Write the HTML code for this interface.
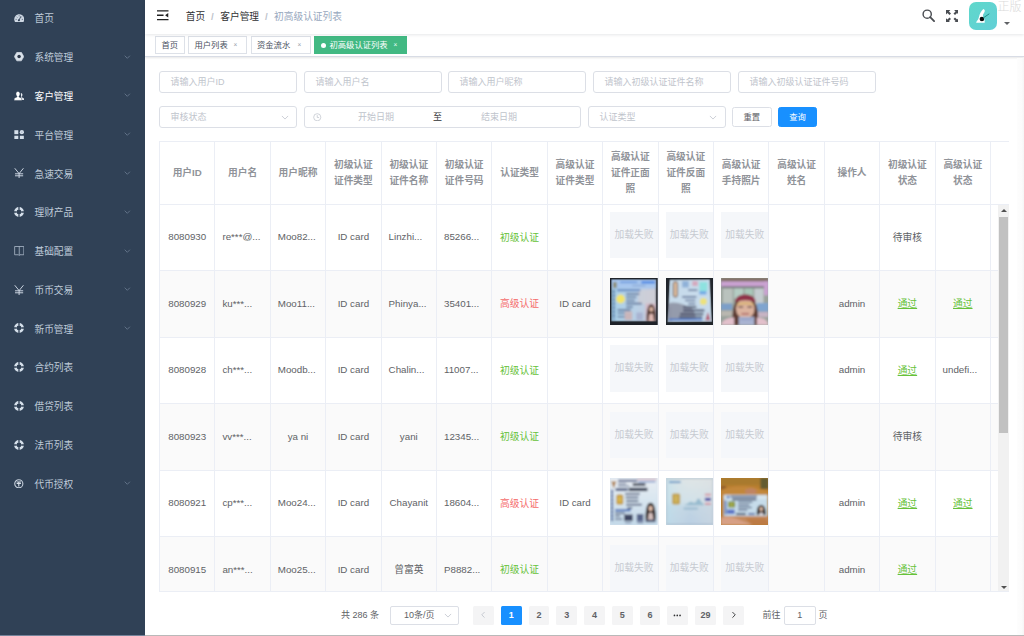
<!DOCTYPE html>
<html lang="zh-CN"><head><meta charset="utf-8"><title>初高级认证列表</title>
<style>
*{box-sizing:border-box;margin:0;padding:0}
html,body{width:1024px;height:636px;overflow:hidden;background:#fff}
body{position:relative;font-family:"Liberation Sans","Noto Sans CJK SC",sans-serif;font-size:9.700px;color:#606266;-webkit-font-smoothing:antialiased}
svg{display:block}
#side{position:absolute;left:0;top:0;width:145px;height:636px;background:#304156}
.mi{position:absolute;left:0;width:145.500px;height:20px;line-height:20px;color:#bfcbd9;font-size:9.700px;white-space:nowrap}
.mi .ic{position:absolute;left:13.300px;top:-1.200px;width:11px;height:20px;display:flex;align-items:center;justify-content:center}
.mi .mt{position:absolute;left:34.500px;top:0}
.mi .arr{position:absolute;left:124px;top:6.500px}
#nav{position:absolute;left:145px;top:0;width:879px;height:34px;z-index:2;background:#fff;box-shadow:0 1px 3px rgba(0,21,41,.10)}
#ham{position:absolute;left:12px;top:10px}
#bc{position:absolute;left:40.800px;top:0;height:33px;line-height:33px;font-size:9.700px;white-space:nowrap}
#bc .b1{color:#303133}
#bc .b2{color:#97a8be}
#bc .sep{color:#c0c4cc;margin:0 6.500px 0 5.900px;font-weight:bold}
#srch{position:absolute;left:776.600px;top:9.300px}
#full{position:absolute;left:800.700px;top:9.600px}
#ava{position:absolute;left:824.300px;top:2px;width:27.500px;height:28px;border-radius:7px;background:linear-gradient(135deg,#5fd8cb,#62cfd6);overflow:hidden}
#caret{position:absolute;left:858.900px;top:21.800px;width:0;height:0;border-left:3px solid transparent;border-right:3px solid transparent;border-top:3.300px solid #606266}
#wm{position:absolute;left:852.500px;top:-1.500px;font-size:12px;line-height:16px;color:#dadada;font-weight:300;white-space:nowrap}
#tags{position:absolute;left:145px;top:34px;width:879px;height:23px;background:#fff;border-bottom:1px solid #d8dce5;box-shadow:0 1px 2px rgba(0,0,0,.10)}
.tag{position:absolute;top:2.300px;height:18px;line-height:16.900px;border:1px solid #dde1e8;background:#fff;color:#495060;font-size:8.300px;padding-left:5.500px;white-space:nowrap;display:block}
.tag i{font-style:normal}
.tag b{font-weight:normal;position:absolute;right:8.600px;top:0;font-size:6.500px;color:#9aa1ad}
.tag.act{background:#42b983;border-color:#42b983;color:#fff;padding-left:14.500px}
.tag.act u{position:absolute;left:5.500px;top:5.500px;width:5.500px;height:5.500px;border-radius:50%;background:#fff}
.tag.act b{color:#e8fff4}
.inp{position:absolute;height:21.500px;border:1px solid #dcdfe6;border-radius:3px;background:#fff;color:#c0c4cc;font-size:9px;line-height:21px;padding-left:10.500px;white-space:nowrap}
.inp .chev{position:absolute;right:7.500px;top:7.500px}
.inp .clk{position:absolute;left:8px;top:5.500px}
.inp .d1{position:absolute;left:53px}
.inp .dz{position:absolute;left:128px;color:#303133}
.inp .d2{position:absolute;left:176px}
.btn{position:absolute;height:19.500px;border:1px solid #dcdfe6;border-radius:2.500px;background:#fff;color:#606266;font-size:8.300px;line-height:18.800px;text-align:center}
.btn.pri{background:#1890ff;border-color:#1890ff;color:#fff}
#tbl{position:absolute;left:159px;top:141px;width:849.500px;height:450.500px;border:1px solid #ebeef5;border-right:none;overflow:hidden;background:#fff}
#thead{position:absolute;left:0;top:0;width:100%;height:62.700px;border-bottom:1px solid #ebeef5}
.th{position:absolute;top:0;height:62.700px;border-right:1px solid #ebeef5;display:flex;align-items:center;justify-content:center;text-align:center;color:#909399;font-weight:bold;font-size:9.700px;line-height:16px}
.th.gut{border-right:1px solid #ebeef5}
#tbody{position:absolute;left:0;top:62.700px;width:849.500px;height:388px;overflow:hidden}
.tr{position:absolute;left:0;width:839px;height:66.550px;border-bottom:1px solid #ebeef5;background:#fff}
.tr.st{background:#fafafa}
.td{position:absolute;top:0;height:66.550px;border-right:1px solid #ebeef5;overflow:hidden;text-align:center;line-height:65.400px;font-size:9.750px;color:#606266;white-space:nowrap}
.tx.la{position:relative;top:-.700px}
.tx.el{position:absolute;left:7px;top:-.700px}
.tx.g{color:#67c23a}
.tx.r{color:#f56c6c}
.tx.lk{text-decoration:underline}
.fail{position:absolute;left:7px;top:7.300px;width:47.500px;height:46.500px;background:#f5f7fa;color:#c6cad1;font-size:9.750px;line-height:46.500px;text-align:center}
.pic{position:absolute;left:7px;top:6.800px;width:47.500px;height:47px;overflow:hidden}
#sb{position:absolute;left:838.200px;top:0;width:10.800px;height:388px;background:#f1f1f1}
#sbt{position:absolute;left:1px;top:12px;width:8.800px;height:216.500px;background:#c1c1c1}
#sbu{position:absolute;left:2.500px;top:4.500px;border-left:3px solid transparent;border-right:3px solid transparent;border-bottom:3px solid #505050}
#sbd{position:absolute;left:2.500px;bottom:4px;border-left:3px solid transparent;border-right:3px solid transparent;border-top:3px solid #505050}
.ptx{position:absolute;top:605.500px;height:19.500px;line-height:19.500px;font-size:9px;color:#606266;white-space:nowrap}
.psel{position:absolute;top:605.500px;height:19.500px;border:1px solid #dcdfe6;border-radius:2px;line-height:17.500px;font-size:9px;color:#606266;padding-left:13px}
.psel .chev{position:absolute;right:5.500px;top:6.500px}
.pb{position:absolute;top:605.500px;width:20.800px;height:19.500px;border-radius:1.500px;background:#f4f4f5;color:#606266;font-size:9px;font-weight:bold;line-height:19.500px;text-align:center;display:flex;align-items:center;justify-content:center}
.pb.on{background:#1890ff;color:#fff}
.pin{position:absolute;top:605.500px;height:19.500px;border:1px solid #dcdfe6;border-radius:2px;line-height:17.500px;font-size:9px;color:#606266;text-align:center}
#bot{position:absolute;left:0;top:635px;width:1024px;height:1px;background:linear-gradient(90deg,#74839a 0,#74839a 145px,#b9b9b9 145px);z-index:5}
#rstrip{position:absolute;left:1016.500px;top:58px;width:7.500px;height:577px;background:linear-gradient(90deg,#fdfdfd,#fbfbfb 70%,#f5f5f5)}
</style></head><body>
<svg width="0" height="0" style="position:absolute;left:0;top:0"><defs><filter id="bl" x="-5%" y="-5%" width="110%" height="110%"><feGaussianBlur stdDeviation="0.8"/></filter></defs></svg>
<div id="side"><div class="mi" style="top:9.35px"><span class="ic"><svg viewBox="0 0 20 16" width="10.500" height="8.200"><path d="M10 .6C4.500 .6 .3 5 .3 10.400c0 1.900.5 3.600 1.400 5h16.600c.9-1.400 1.400-3.100 1.400-5C19.700 5 15.500 .6 10 .6z" fill="#cdd7e3"/><path d="M9.300 12.500 13 5" stroke="#304156" stroke-width="1.700" stroke-linecap="round"/><circle cx="9.300" cy="12.300" r="2" fill="#304156"/><path d="M2.800 10.500H5M15 10.500h2.200M4.800 5.400l1.500 1.500M9.800 2.600v2M15.200 5.600l-1 1" stroke="#304156" stroke-width="1.300"/></svg></span><span class="mt">首页</span></div><div class="mi" style="top:48.14px"><span class="ic"><svg viewBox="0 0 20 18" width="10.200" height="9.200"><path d="M5.600 .6h8.800l4.900 8.400-4.900 8.400H5.600L.7 9z" fill="#d9e1ea" stroke="#d9e1ea" stroke-width="1.200" stroke-linejoin="round"/><circle cx="10" cy="9" r="3.400" fill="#2b3647"/></svg></span><span class="mt">系统管理</span><svg class="arr" viewBox="0 0 10 6" width="6.600" height="4"><path d="M1 1l4 4 4-4" fill="none" stroke="#6f7f94" stroke-width="1.200"/></svg></div><div class="mi" style="top:86.93px"><span class="ic"><svg viewBox="0 0 20 20" width="10.200" height="10.200"><path d="M13.300 3.800c2 0 3.300 1.600 3.300 3.700 0 1.500-.6 2.700-1.500 3.400v1.200l3.700 1.900c.6.300.9.800.9 1.400v2.400h-5.200z" fill="#e9eef4"/><path d="M7.600 1c2.600 0 4.200 2 4.200 4.700 0 1.900-.8 3.500-2 4.400v1.500l4.400 2.200c.7.400 1.100 1 1.100 1.800v2.900H.3v-2.900c0-.8.400-1.400 1.100-1.800l4.400-2.200v-1.500c-1.200-.9-2-2.500-2-4.400C3.800 3 5 1 7.600 1z" fill="#fff" stroke="#304156" stroke-width=".9"/></svg></span><span class="mt" style="color:#fff">客户管理</span><svg class="arr" viewBox="0 0 10 6" width="6.600" height="4"><path d="M1 1l4 4 4-4" fill="none" stroke="#6f7f94" stroke-width="1.200"/></svg></div><div class="mi" style="top:125.72px"><span class="ic"><svg viewBox="0 0 20 20" width="10.200" height="9.900"><rect x=".4" y=".4" width="8" height="8" fill="#d5dfea"/><rect x=".4" y="11.600" width="8" height="8" fill="#d5dfea"/><rect x="11.600" y="11.600" width="8" height="8" fill="#d5dfea"/><circle cx="15.600" cy="4.400" r="4.300" fill="#d5dfea"/><circle cx="15.600" cy="4.400" r="1.200" fill="#9fb0c4"/></svg></span><span class="mt">平台管理</span><svg class="arr" viewBox="0 0 10 6" width="6.600" height="4"><path d="M1 1l4 4 4-4" fill="none" stroke="#6f7f94" stroke-width="1.200"/></svg></div><div class="mi" style="top:164.51px"><span class="ic"><svg viewBox="0 0 20 20" width="10.200" height="10.200"><path d="M1.500 .5 10 11 18.500 .5M10 10.500V20M2 11.400h16M2 15.300h16" fill="none" stroke="#cfd9e5" stroke-width="1.900"/></svg></span><span class="mt">急速交易</span><svg class="arr" viewBox="0 0 10 6" width="6.600" height="4"><path d="M1 1l4 4 4-4" fill="none" stroke="#6f7f94" stroke-width="1.200"/></svg></div><div class="mi" style="top:203.30px"><span class="ic"><svg viewBox="0 0 20 20" width="10" height="10"><circle cx="10" cy="10" r="7.300" fill="none" stroke="#d6e0eb" stroke-width="5"/><path d="M10 0v5.500M10 14.500V20M0 10h5.500M14.500 10H20" stroke="#304156" stroke-width="2.700"/></svg></span><span class="mt">理财产品</span><svg class="arr" viewBox="0 0 10 6" width="6.600" height="4"><path d="M1 1l4 4 4-4" fill="none" stroke="#6f7f94" stroke-width="1.200"/></svg></div><div class="mi" style="top:242.09px"><span class="ic"><svg viewBox="0 0 20 20" width="10.500" height="10"><path d="M.8 1h18.400v16.500h-7.700l-1.500 1.500-1.500-1.500H.8zM10 1V18.500" fill="none" stroke="#b4c1d1" stroke-width="1.500"/></svg></span><span class="mt">基础配置</span><svg class="arr" viewBox="0 0 10 6" width="6.600" height="4"><path d="M1 1l4 4 4-4" fill="none" stroke="#6f7f94" stroke-width="1.200"/></svg></div><div class="mi" style="top:280.88px"><span class="ic"><svg viewBox="0 0 20 20" width="10.200" height="10.200"><path d="M1.500 .5 10 11 18.500 .5M10 10.500V20M2 11.400h16M2 15.300h16" fill="none" stroke="#cfd9e5" stroke-width="1.900"/></svg></span><span class="mt">币币交易</span><svg class="arr" viewBox="0 0 10 6" width="6.600" height="4"><path d="M1 1l4 4 4-4" fill="none" stroke="#6f7f94" stroke-width="1.200"/></svg></div><div class="mi" style="top:319.67px"><span class="ic"><svg viewBox="0 0 20 20" width="10" height="10"><circle cx="10" cy="10" r="7.300" fill="none" stroke="#d6e0eb" stroke-width="5"/><path d="M10 0v5.500M10 14.500V20M0 10h5.500M14.500 10H20" stroke="#304156" stroke-width="2.700"/></svg></span><span class="mt">新币管理</span><svg class="arr" viewBox="0 0 10 6" width="6.600" height="4"><path d="M1 1l4 4 4-4" fill="none" stroke="#6f7f94" stroke-width="1.200"/></svg></div><div class="mi" style="top:358.46px"><span class="ic"><svg viewBox="0 0 20 20" width="10" height="10"><circle cx="10" cy="10" r="7.300" fill="none" stroke="#d6e0eb" stroke-width="5"/><path d="M10 0v5.500M10 14.500V20M0 10h5.500M14.500 10H20" stroke="#304156" stroke-width="2.700"/></svg></span><span class="mt">合约列表</span></div><div class="mi" style="top:397.25px"><span class="ic"><svg viewBox="0 0 20 20" width="10" height="10"><circle cx="10" cy="10" r="7.300" fill="none" stroke="#d6e0eb" stroke-width="5"/><path d="M10 0v5.500M10 14.500V20M0 10h5.500M14.500 10H20" stroke="#304156" stroke-width="2.700"/></svg></span><span class="mt">借贷列表</span></div><div class="mi" style="top:436.04px"><span class="ic"><svg viewBox="0 0 20 20" width="10" height="10"><circle cx="10" cy="10" r="7.300" fill="none" stroke="#d6e0eb" stroke-width="5"/><path d="M10 0v5.500M10 14.500V20M0 10h5.500M14.500 10H20" stroke="#304156" stroke-width="2.700"/></svg></span><span class="mt">法币列表</span></div><div class="mi" style="top:474.83px"><span class="ic"><svg viewBox="0 0 20 20" width="9.600" height="9.600"><circle cx="10" cy="10" r="8.500" fill="none" stroke="#c9d3df" stroke-width="2.200"/><path d="M5.500 6.300h9M5.500 9.300h9M10 6.300v9.500" stroke="#dbe3ec" stroke-width="2.300" fill="none"/></svg></span><span class="mt">代币授权</span><svg class="arr" viewBox="0 0 10 6" width="6.600" height="4"><path d="M1 1l4 4 4-4" fill="none" stroke="#6f7f94" stroke-width="1.200"/></svg></div></div>
<div id="nav">
<svg id="ham" viewBox="0 0 22 20" width="11.500" height="10.500"><path d="M0 1.500h22M0 10h12.500M0 18.500h22" stroke="#222" stroke-width="2.600"/><path d="M21.500 5.500v9L15.500 10z" fill="#222"/></svg>
<div id="bc"><span class="b1">首页</span><span class="sep">/</span><span class="b1">客户管理</span><span class="sep">/</span><span class="b2">初高级认证列表</span></div>
<svg id="srch" viewBox="0 0 20 20" width="13" height="13"><circle cx="8" cy="8" r="6.300" fill="none" stroke="#4a4d52" stroke-width="2.200"/><path d="M12.600 12.600 18.600 18.600" stroke="#4a4d52" stroke-width="2.800" stroke-linecap="round"/></svg>
<svg id="full" viewBox="0 0 20 20" width="12.500" height="12.500"><g fill="#4a4d52"><path d="M0 0h7L4.700 2.300 8 5.600 5.600 8 2.300 4.700 0 7z"/><path d="M20 0v7l-2.300-2.300L14.400 8 12 5.600l3.300-3.300L13 0z"/><path d="M0 20v-7l2.300 2.300L5.600 12 8 14.400l-3.300 3.300L7 20z"/><path d="M20 20h-7l2.300-2.300L12 14.400l2.400-2.400 3.300 3.300L20 13z"/></g></svg>
<div id="ava"><svg viewBox="0 0 27.500 28" width="27.500" height="28"><path d="M14.300 6.900c1.300.3 1.700 1.500 1.400 2.700-.4 1.500-1.600 2.400-1.800 3.900-.2 1.500 1.300 2.600 1.600 4.300.2 1 .3 2 .2 3H7.100c.3-1.600 1.600-2.300 2.200-3.800.8-2 1-4.100 2-6 .7-1.500 1.700-2.900 3-4.100z" fill="#fff"/><circle cx="12.900" cy="17" r="2.300" fill="#0b0b0b"/><path d="M14.300 15.900 20 12" stroke="#1f8f86" stroke-width="1" stroke-linecap="round"/></svg></div>
<div id="caret"></div>
<div id="wm">正版</div>
</div>
<div id="tags">
<span class="tag" style="left:10px;width:29.500px">首页</span>
<span class="tag" style="left:43px;width:59px"><i>用户列表</i><b>×</b></span>
<span class="tag" style="left:105.500px;width:60.500px"><i>资金流水</i><b>×</b></span>
<span class="tag act" style="left:169px;width:93px"><u></u><i>初高级认证列表</i><b>×</b></span>
</div>
<div class="inp" style="left:159px;top:71px;width:138px"><span>请输入用户ID</span></div><div class="inp" style="left:304px;top:71px;width:138px"><span>请输入用户名</span></div><div class="inp" style="left:448px;top:71px;width:138px"><span>请输入用户昵称</span></div><div class="inp" style="left:593px;top:71px;width:138px"><span>请输入初级认证证件名称</span></div><div class="inp" style="left:738px;top:71px;width:138px"><span>请输入初级认证证件号码</span></div><div class="inp" style="left:159px;top:106px;width:138px"><span>审核状态</span><svg class="chev" viewBox="0 0 12 8" width="8" height="5"><path d="M1 1.500l5 5 5-5" fill="none" stroke="#c0c4cc" stroke-width="1.300"/></svg></div><div class="inp" style="left:304px;top:106px;width:276.500px">
<svg class="clk" viewBox="0 0 14 14" width="8.500" height="8.500"><circle cx="7" cy="7" r="5.900" fill="none" stroke="#c0c4cc" stroke-width="1.200"/><path d="M7 3.500V7.400h3" fill="none" stroke="#c0c4cc" stroke-width="1.200"/></svg>
<span class="d1">开始日期</span><span class="dz">至</span><span class="d2">结束日期</span></div><div class="inp" style="left:588px;top:106px;width:137.500px"><span>认证类型</span><svg class="chev" viewBox="0 0 12 8" width="8" height="5"><path d="M1 1.500l5 5 5-5" fill="none" stroke="#c0c4cc" stroke-width="1.300"/></svg></div><div class="btn" style="left:732px;top:107.300px;width:39.500px">重置</div><div class="btn pri" style="left:778px;top:107.300px;width:39px">查询</div>
<div id="tbl">
<div id="thead"><div class="th" style="left:0.00px;width:55.40px"><span>用户ID</span></div><div class="th" style="left:55.40px;width:55.40px"><span>用户名</span></div><div class="th" style="left:110.80px;width:55.40px"><span>用户昵称</span></div><div class="th" style="left:166.20px;width:55.40px"><span>初级认证<br>证件类型</span></div><div class="th" style="left:221.60px;width:55.40px"><span>初级认证<br>证件名称</span></div><div class="th" style="left:277.00px;width:55.40px"><span>初级认证<br>证件号码</span></div><div class="th" style="left:332.40px;width:55.40px"><span>认证类型</span></div><div class="th" style="left:387.80px;width:55.40px"><span>高级认证<br>证件类型</span></div><div class="th" style="left:443.20px;width:55.40px"><span>高级认证<br>证件正面<br>照</span></div><div class="th" style="left:498.60px;width:55.40px"><span>高级认证<br>证件反面<br>照</span></div><div class="th" style="left:554.00px;width:55.40px"><span>高级认证<br>手持照片</span></div><div class="th" style="left:609.40px;width:55.40px"><span>高级认证<br>姓名</span></div><div class="th" style="left:664.80px;width:55.40px"><span>操作人</span></div><div class="th" style="left:720.20px;width:55.40px"><span>初级认证<br>状态</span></div><div class="th" style="left:775.60px;width:55.40px"><span>高级认证<br>状态</span></div><div class="th gut" style="left:831.00px;width:18.500px"></div></div>
<div id="tbody"><div class="tr" style="top:0.00px"><div class="td" style="left:0.00px;width:55.40px"><span class="tx la">8080930</span></div><div class="td" style="left:55.40px;width:55.40px"><span class="tx el la">re***@...</span></div><div class="td" style="left:110.80px;width:55.40px"><span class="tx el la">Moo82...</span></div><div class="td" style="left:166.20px;width:55.40px"><span class="tx la">ID card</span></div><div class="td" style="left:221.60px;width:55.40px"><span class="tx el la">Linzhi...</span></div><div class="td" style="left:277.00px;width:55.40px"><span class="tx el la">85266...</span></div><div class="td" style="left:332.40px;width:55.40px"><span class="tx g">初级认证</span></div><div class="td" style="left:387.80px;width:55.40px"></div><div class="td" style="left:443.20px;width:55.40px"><div class="fail"><span>加载失败</span></div></div><div class="td" style="left:498.60px;width:55.40px"><div class="fail"><span>加载失败</span></div></div><div class="td" style="left:554.00px;width:55.40px"><div class="fail"><span>加载失败</span></div></div><div class="td" style="left:609.40px;width:55.40px"></div><div class="td" style="left:664.80px;width:55.40px"></div><div class="td" style="left:720.20px;width:55.40px"><span class="tx">待审核</span></div><div class="td" style="left:775.60px;width:55.40px"></div></div><div class="tr st" style="top:66.55px"><div class="td" style="left:0.00px;width:55.40px"><span class="tx la">8080929</span></div><div class="td" style="left:55.40px;width:55.40px"><span class="tx el la">ku***...</span></div><div class="td" style="left:110.80px;width:55.40px"><span class="tx el la">Moo11...</span></div><div class="td" style="left:166.20px;width:55.40px"><span class="tx la">ID card</span></div><div class="td" style="left:221.60px;width:55.40px"><span class="tx el la">Phinya...</span></div><div class="td" style="left:277.00px;width:55.40px"><span class="tx el la">35401...</span></div><div class="td" style="left:332.40px;width:55.40px"><span class="tx r">高级认证</span></div><div class="td" style="left:387.80px;width:55.40px"><span class="tx la">ID card</span></div><div class="td" style="left:443.20px;width:55.40px"><div class="pic"><svg viewBox="0 0 47 47" width="47.500" height="47" preserveAspectRatio="none"><defs><linearGradient id="g1" x1="0" y1="0" x2="1" y2="0"><stop offset="0" stop-color="#a8d0e8"/><stop offset=".55" stop-color="#b9d0e6"/><stop offset="1" stop-color="#c6c9d9"/></linearGradient></defs><rect width="47" height="47" fill="#1d2127"/><g filter="url(#bl)"><rect x="1.1" y="1.1" width="44.800" height="42.600" fill="url(#g1)"/><rect x="1.1" y="1.1" width="44.8" height="9.2" fill="#a7c6ee"/><rect x="3" y="4" width="3.6" height="6" fill="#8d8f74"/><rect x="10" y="3.6" width="17" height="1.4" fill="#5b8fd8"/><rect x="31" y="3.2" width="13.5" height="2.2" fill="#3f7fe2"/><rect x="22" y="7" width="13" height="1.1" fill="#86a3cd"/><rect x="28" y="12" width="17.5" height="14" fill="#d0cfd6" opacity=".75"/><rect x="2.4" y="11" width="2.6" height="31.5" fill="#7fa6c9"/><rect x="2.4" y="13" width="2.6" height="1.2" fill="#4f6d97"/><rect x="2.4" y="17" width="2.6" height="1.2" fill="#4f6d97"/><rect x="2.4" y="21" width="2.6" height="1.2" fill="#4f6d97"/><rect x="2.4" y="25" width="2.6" height="1.2" fill="#4f6d97"/><rect x="2.4" y="29" width="2.6" height="1.2" fill="#4f6d97"/><rect x="2.4" y="33" width="2.6" height="1.2" fill="#4f6d97"/><rect x="2.4" y="37" width="2.6" height="1.2" fill="#4f6d97"/><rect x="7" y="11.3" width="23" height="1.9" fill="#5a80bd"/><circle cx="10.500" cy="21" r="4.400" fill="#f2e468"/><rect x="16" y="15.3" width="13" height="1.5" fill="#566b93"/><rect x="16" y="18.6" width="10" height="1.4" fill="#566b93"/><rect x="16" y="21.8" width="8.5" height="1.4" fill="#566b93"/><rect x="16" y="24.8" width="15.5" height="1.6" fill="#566b93"/><rect x="16" y="28.3" width="6.5" height="1.4" fill="#566b93"/><rect x="7.5" y="31.3" width="13" height="1.6" fill="#566b93"/><rect x="7.5" y="34.6" width="8" height="1.3" fill="#566b93"/><rect x="7.5" y="38" width="9" height="1.3" fill="#566b93"/><rect x="14.5" y="33.5" width="7.5" height="8.5" fill="#c9b5ba"/><rect x="26" y="34.5" width="6.5" height="7.5" fill="#a9b4d2"/><rect x="35" y="25.5" width="10.8" height="18" fill="#d5bcc8"/><path d="M36.300 43.500c-.3-7 .2-17.300 4.500-17.300s4.800 10.300 4.500 17.300z" fill="#4b302c"/><ellipse cx="40.800" cy="31.300" rx="1.900" ry="2.500" fill="#dfb8a6"/><path d="M39 36h3.600l1 7.500h-5.600z" fill="#e0b9b4"/></g><path d="M0 0H47V47H0zM1.200 1.300V43.400H45.900V1.300z" fill="#1d2127" fill-rule="evenodd" opacity=".92"/></svg></div></div><div class="td" style="left:498.60px;width:55.40px"><div class="pic"><svg viewBox="0 0 47 47" width="47.500" height="47" preserveAspectRatio="none"><rect width="47" height="47" fill="#1f2329"/><g filter="url(#bl)"><path d="M3.300 1.400 43.600 1.100 45.700 44 1.300 44.600z" fill="#c7dbeb"/><path d="M1.300 44.600 2 30 6 28v16z" fill="#aebfd0"/><rect x="7.200" y="3.600" width="4.200" height="15.500" rx="2" fill="#dcbb9f" stroke="#5a463c" stroke-width=".9"/><rect x="16" y="3" width="6.5" height="6.5" fill="#8fb1d8"/><rect x="26" y="3" width="5.5" height="5" fill="#d4a9bd"/><rect x="33" y="4" width="8" height="9" fill="#8ee2e0"/><rect x="33" y="13.2" width="7" height="3.2" fill="#6da8e4"/><circle cx="37" cy="23.500" r="3.500" fill="#ece27c"/><path d="M2 25.500C10 22.500 18 27 27 31l3 9.500L2 42.500z" fill="#8d92a3" opacity=".88"/><rect x="22" y="11.5" width="9" height="1.3" fill="#50618a"/><rect x="16" y="18.2" width="14" height="1.4" fill="#50618a"/><rect x="19" y="21.8" width="10" height="1.3" fill="#50618a"/><rect x="22" y="25" width="7" height="1.3" fill="#50618a"/><rect x="17" y="28.2" width="13" height="1.7" fill="#3c4563"/><rect x="17" y="31.5" width="21" height="1.9" fill="#3c4563"/><rect x="14" y="35" width="23" height="1.9" fill="#3c4563"/><rect x="13" y="38.2" width="23" height="1.6" fill="#3c4563"/><rect x="3" y="40.6" width="33" height="2" fill="#4a75c6"/><path d="M38.800 42.300 41.500 34 44 42.300z" fill="#b25a72"/></g><path d="M0 0H47V47H0zM3.300 1.200 1.400 44.300 45.600 43.900 43.700 1.200z" fill="#1f2329" fill-rule="evenodd" opacity=".9"/></svg></div></div><div class="td" style="left:554.00px;width:55.40px"><div class="pic"><svg viewBox="0 0 47 47" width="47.500" height="47" preserveAspectRatio="none"><rect width="47" height="47" fill="#9aa39c"/><g filter="url(#bl)"><rect x="0" y="0" width="47" height="47" fill="#9aa39c"/><rect x="0" y="0" width="47" height="3.6" fill="#7d6b5f"/><rect x="0" y="3.4" width="47" height="5.2" fill="#caa2d2"/><rect x="42.5" y="3.4" width="4.5" height="14" fill="#caa2d2"/><rect x="0.8" y="8.6" width="41.8" height="1.2" fill="#5e5f66"/><rect x="2" y="10.5" width="9.5" height="15" fill="#b9c2bd"/><rect x="13" y="10.5" width="9" height="10" fill="#b5cdc4"/><rect x="23.5" y="10.5" width="8" height="8" fill="#a8c7b9"/><rect x="33" y="10.5" width="9" height="16" fill="#c4ccd0"/><rect x="0" y="25.5" width="11" height="6.5" fill="#7b9fc8"/><rect x="35.5" y="25" width="11.5" height="8.5" fill="#7fa4cf"/><rect x="0" y="33" width="12" height="5" fill="#b9b7b0"/><rect x="36" y="34" width="11" height="5" fill="#c7b4c4"/><path d="M11.500 47c-1-12 .2-28.500 12.500-28.500S37.500 35 36.500 47z" fill="#5b3b32"/><ellipse cx="24" cy="30.800" rx="9.200" ry="10" fill="#dcb39f"/><path d="M13.800 24.300c.6-5.800 4.800-7.800 10.200-7.800s9.800 2 10.400 7.800c-5.600-2.700-15-2.700-20.600 0z" fill="#8f3048"/><path d="M15.500 25.500c4-2 13-2 17 0l-.5 2.200c-4-1.400-12-1.400-16 0z" fill="#d9b25f" opacity=".55"/><rect x="17.3" y="28.4" width="4.6" height="1.1" fill="#4b3230"/><rect x="26.2" y="28.4" width="4.6" height="1.1" fill="#4b3230"/><rect x="20.3" y="35.2" width="7.4" height="1.3" fill="#a3565f"/><path d="M0 47c1.500-5.500 7-7.500 13-7.500V47zM47 47c-1.500-5.500-6-7.500-11.500-7.500V47z" fill="#e2c0cb"/><rect x="17.5" y="38.8" width="15.5" height="8.2" fill="#a9b3d1"/><rect x="19" y="40.5" width="12.5" height="1.3" fill="#8d9bc4"/></g></svg></div></div><div class="td" style="left:609.40px;width:55.40px"></div><div class="td" style="left:664.80px;width:55.40px"><span class="tx la">admin</span></div><div class="td" style="left:720.20px;width:55.40px"><span class="tx g lk">通过</span></div><div class="td" style="left:775.60px;width:55.40px"><span class="tx g lk">通过</span></div></div><div class="tr" style="top:133.10px"><div class="td" style="left:0.00px;width:55.40px"><span class="tx la">8080928</span></div><div class="td" style="left:55.40px;width:55.40px"><span class="tx el la">ch***...</span></div><div class="td" style="left:110.80px;width:55.40px"><span class="tx el la">Moodb...</span></div><div class="td" style="left:166.20px;width:55.40px"><span class="tx la">ID card</span></div><div class="td" style="left:221.60px;width:55.40px"><span class="tx el la">Chalin...</span></div><div class="td" style="left:277.00px;width:55.40px"><span class="tx el la">11007...</span></div><div class="td" style="left:332.40px;width:55.40px"><span class="tx g">初级认证</span></div><div class="td" style="left:387.80px;width:55.40px"></div><div class="td" style="left:443.20px;width:55.40px"><div class="fail"><span>加载失败</span></div></div><div class="td" style="left:498.60px;width:55.40px"><div class="fail"><span>加载失败</span></div></div><div class="td" style="left:554.00px;width:55.40px"><div class="fail"><span>加载失败</span></div></div><div class="td" style="left:609.40px;width:55.40px"></div><div class="td" style="left:664.80px;width:55.40px"><span class="tx la">admin</span></div><div class="td" style="left:720.20px;width:55.40px"><span class="tx g lk">通过</span></div><div class="td" style="left:775.60px;width:55.40px"><span class="tx el la">undefi...</span></div></div><div class="tr st" style="top:199.65px"><div class="td" style="left:0.00px;width:55.40px"><span class="tx la">8080923</span></div><div class="td" style="left:55.40px;width:55.40px"><span class="tx el la">vv***...</span></div><div class="td" style="left:110.80px;width:55.40px"><span class="tx la">ya ni</span></div><div class="td" style="left:166.20px;width:55.40px"><span class="tx la">ID card</span></div><div class="td" style="left:221.60px;width:55.40px"><span class="tx la">yani</span></div><div class="td" style="left:277.00px;width:55.40px"><span class="tx el la">12345...</span></div><div class="td" style="left:332.40px;width:55.40px"><span class="tx g">初级认证</span></div><div class="td" style="left:387.80px;width:55.40px"></div><div class="td" style="left:443.20px;width:55.40px"><div class="fail"><span>加载失败</span></div></div><div class="td" style="left:498.60px;width:55.40px"><div class="fail"><span>加载失败</span></div></div><div class="td" style="left:554.00px;width:55.40px"><div class="fail"><span>加载失败</span></div></div><div class="td" style="left:609.40px;width:55.40px"></div><div class="td" style="left:664.80px;width:55.40px"></div><div class="td" style="left:720.20px;width:55.40px"><span class="tx">待审核</span></div><div class="td" style="left:775.60px;width:55.40px"></div></div><div class="tr" style="top:266.20px"><div class="td" style="left:0.00px;width:55.40px"><span class="tx la">8080921</span></div><div class="td" style="left:55.40px;width:55.40px"><span class="tx el la">cp***...</span></div><div class="td" style="left:110.80px;width:55.40px"><span class="tx el la">Moo24...</span></div><div class="td" style="left:166.20px;width:55.40px"><span class="tx la">ID card</span></div><div class="td" style="left:221.60px;width:55.40px"><span class="tx la">Chayanit</span></div><div class="td" style="left:277.00px;width:55.40px"><span class="tx el la">18604...</span></div><div class="td" style="left:332.40px;width:55.40px"><span class="tx r">高级认证</span></div><div class="td" style="left:387.80px;width:55.40px"><span class="tx la">ID card</span></div><div class="td" style="left:443.20px;width:55.40px"><div class="pic"><svg viewBox="0 0 47 47" width="47.500" height="47" preserveAspectRatio="none"><defs><linearGradient id="g4" x1="0" y1="0" x2="0" y2="1"><stop offset="0" stop-color="#e9edf3"/><stop offset=".45" stop-color="#d9e6f0"/><stop offset="1" stop-color="#c3d8e8"/></linearGradient></defs><rect width="47" height="47" fill="#d6e3ee"/><g filter="url(#bl)"><rect x="0" y="0" width="47" height="47" fill="url(#g4)"/><rect x="27" y="0.6" width="19" height="1.6" fill="#d7b9c2"/><path d="M1.800 3.500 3.700 9.500 5.600 3.500 4.500 3.500 3.700 6 2.900 3.500z" fill="#a8763e" stroke="#a8763e" stroke-width=".7"/><rect x="8" y="1.8" width="19" height="1.9" fill="#4a5a84"/><rect x="8" y="5" width="8" height="1.3" fill="#74809b"/><rect x="8" y="7.4" width="11" height="1.2" fill="#74809b"/><rect x="22.5" y="5.3" width="12.5" height="2.5" fill="#333a4c"/><rect x="28" y="3" width="17" height="1.3" fill="#6f8fc8"/><rect x="5.5" y="10.3" width="12" height="2.6" fill="#46557c"/><rect x="18.5" y="9.8" width="18.5" height="3.3" fill="#2f384f"/><rect x="15" y="15" width="14.5" height="1.7" fill="#56627f"/><rect x="15.5" y="18.6" width="12.5" height="1.7" fill="#56627f"/><rect x="16" y="22.2" width="12" height="1.7" fill="#56627f"/><rect x="16" y="25.8" width="15.5" height="1.7" fill="#56627f"/><rect x="17" y="29.2" width="5" height="1.6" fill="#56627f"/><rect x="6.300" y="16.500" width="6.800" height="10" rx="1.600" fill="#c39a3a"/><rect x="7.800" y="18.500" width="3.800" height="6" rx="1" fill="#d8b552"/><rect x="1.3" y="11.5" width="1.7" height="31.5" fill="#5c79b0"/><rect x="1.3" y="13" width="1.7" height="1.5" fill="#2f447c"/><rect x="1.3" y="17" width="1.7" height="1.5" fill="#2f447c"/><rect x="1.3" y="21" width="1.7" height="1.5" fill="#2f447c"/><rect x="1.3" y="25" width="1.7" height="1.5" fill="#2f447c"/><rect x="1.3" y="29" width="1.7" height="1.5" fill="#2f447c"/><rect x="1.3" y="33" width="1.7" height="1.5" fill="#2f447c"/><rect x="1.3" y="37" width="1.7" height="1.5" fill="#2f447c"/><rect x="1.3" y="41" width="1.7" height="1.5" fill="#2f447c"/><rect x="5" y="31.2" width="15.5" height="2.2" fill="#4f73b8"/><rect x="5" y="34.6" width="9.5" height="1.5" fill="#5d6985"/><rect x="5" y="37.3" width="5" height="1.3" fill="#5d6985"/><rect x="5" y="40.5" width="7" height="1.3" fill="#5d6985"/><rect x="14" y="36.5" width="8.5" height="6.5" fill="#3f4663"/><rect x="26.5" y="36" width="6.5" height="7.5" fill="#566389"/><rect x="15" y="44" width="6" height="1.2" fill="#7582a3"/><rect x="27" y="44" width="6" height="1.2" fill="#7582a3"/><path d="M35.300 41.800c-.4-6.500.2-17 4.900-17s5.300 10.500 4.900 17z" fill="#2c2322"/><ellipse cx="40.200" cy="30.500" rx="2" ry="2.800" fill="#e2bfac"/><path d="M38.400 35h3.600l.8 6.800h-5.200z" fill="#d9c3c0"/><rect x="35.2" y="41.8" width="9.8" height="2.3" fill="#474f6e"/></g></svg></div></div><div class="td" style="left:498.60px;width:55.40px"><div class="pic"><svg viewBox="0 0 47 47" width="47.500" height="47" preserveAspectRatio="none"><defs><linearGradient id="g5a" x1="0" y1="0" x2="0" y2="1"><stop offset="0" stop-color="#dfe5e6"/><stop offset=".5" stop-color="#cfe1ea"/><stop offset=".62" stop-color="#bcd3e4"/><stop offset="1" stop-color="#b3cbe2"/></linearGradient><linearGradient id="g5b" x1="0" y1="0" x2="1" y2="0"><stop offset="0" stop-color="#bfe0ec" stop-opacity=".7"/><stop offset=".5" stop-color="#dfe3e3" stop-opacity=".15"/><stop offset="1" stop-color="#d9dcdf" stop-opacity=".5"/></linearGradient></defs><rect width="47" height="47" fill="#c9dde9"/><g filter="url(#bl)"><rect x="0" y="0" width="47" height="47" fill="url(#g5a)"/><rect x="0" y="0" width="47" height="47" fill="url(#g5b)"/><rect x="3" y="3.4" width="11.5" height="1.5" fill="#4f86bd"/><rect x="6" y="15.500" width="8" height="11" rx="1.700" fill="#c0a04c"/><rect x="7.600" y="17.500" width="4.800" height="7" rx="1" fill="#cdb05a"/><path d="M18.500 27c2.500-.6 4.200-3 6-3.300s2.300 1.600 4 1 2.200-4.300 3.700-4.300 2.800 4.600 5.300 5.600V27.300H18.500z" fill="#98bbcf"/><rect x="38.5" y="15.8" width="6" height="1.7" fill="#d28a98"/><rect x="38.5" y="18.2" width="6" height="1.2" fill="#e9e2ea"/><rect x="38.5" y="19.8" width="6" height="3.2" fill="#4e4fa6"/><rect x="38.5" y="23.4" width="6" height="1.2" fill="#e9e2ea"/><rect x="38.5" y="25" width="6" height="1.7" fill="#cf8595"/><rect x="17.5" y="29.8" width="14" height="1.5" fill="#8eb2ca"/><rect x="0" y="0" width="47" height="0.8" fill="#aeb7bf"/><rect x="0" y="46" width="47" height="1" fill="#9fb0c4"/><rect x="0" y="0" width="0.8" height="47" fill="#b5bfc8"/><rect x="46.2" y="0" width="0.8" height="47" fill="#b5bfc8"/></g></svg></div></div><div class="td" style="left:554.00px;width:55.40px"><div class="pic"><svg viewBox="0 0 47 47" width="47.500" height="47" preserveAspectRatio="none"><rect width="47" height="47" fill="#b77d2e"/><g filter="url(#bl)"><rect x="0" y="0" width="47" height="47" fill="#b77d2e"/><rect x="0" y="0" width="47" height="7" fill="#a87a2f"/><rect x="39" y="0" width="8" height="11" fill="#625c31"/><rect x="0" y="8" width="5" height="9" fill="#8d5a2a"/><path d="M0 12c9-4 22-4.500 33-2.500L47 13.500v6H0z" fill="#c2873a"/><ellipse cx="29.500" cy="13.500" rx="6" ry="3.300" fill="#c08462"/><rect x="2.600" y="16.800" width="43.600" height="21.400" rx="1.200" fill="#c6dcea"/><rect x="3.4" y="17.6" width="42" height="3.5" fill="#d6e4ee"/><rect x="5.5" y="18" width="3" height="2.2" fill="#5b78b8"/><rect x="9.5" y="17.8" width="26" height="1.6" fill="#4a5a82"/><rect x="11" y="20.6" width="24" height="1.7" fill="#3d4868"/><rect x="7" y="23.600" width="7" height="6" rx="1.100" fill="#7f9036"/><rect x="8.600" y="24.800" width="3.800" height="3.600" fill="#a3ab4e"/><rect x="17" y="23.6" width="14" height="1.4" fill="#65738f"/><rect x="17" y="26.2" width="11" height="1.4" fill="#65738f"/><rect x="17" y="28.8" width="13.5" height="1.4" fill="#65738f"/><rect x="17" y="31.3" width="9" height="1.4" fill="#65738f"/><rect x="3.6" y="22.5" width="1.7" height="14" fill="#4d67aa"/><rect x="6" y="31.5" width="7.5" height="4.5" fill="#5b74c6"/><rect x="15" y="35" width="9.5" height="1.9" fill="#3e4966"/><rect x="27" y="35" width="6.5" height="1.9" fill="#5d6fa6"/><path d="M35.500 37c-.3-4.500.3-10 4.300-10s4.600 5.500 4.300 10z" fill="#2b211f"/><ellipse cx="39.800" cy="31" rx="1.700" ry="2.200" fill="#e0bfab"/><path d="M38.300 34.500h3l.8 2.500h-4.600z" fill="#d9d0d4"/><rect x="0" y="38.2" width="47" height="8.8" fill="#c48a5e"/><path d="M0 40c6-2 13-.5 18 1.800s9.500 3.400 13 5.200H0z" fill="#d7a085"/><path d="M24 40.500h20c2 1.200 3 4 3 6.500H31z" fill="#bd7a44"/></g></svg></div></div><div class="td" style="left:609.40px;width:55.40px"></div><div class="td" style="left:664.80px;width:55.40px"><span class="tx la">admin</span></div><div class="td" style="left:720.20px;width:55.40px"><span class="tx g lk">通过</span></div><div class="td" style="left:775.60px;width:55.40px"><span class="tx g lk">通过</span></div></div><div class="tr st" style="top:332.75px"><div class="td" style="left:0.00px;width:55.40px"><span class="tx la">8080915</span></div><div class="td" style="left:55.40px;width:55.40px"><span class="tx el la">an***...</span></div><div class="td" style="left:110.80px;width:55.40px"><span class="tx el la">Moo25...</span></div><div class="td" style="left:166.20px;width:55.40px"><span class="tx la">ID card</span></div><div class="td" style="left:221.60px;width:55.40px"><span class="tx">曾富英</span></div><div class="td" style="left:277.00px;width:55.40px"><span class="tx el la">P8882...</span></div><div class="td" style="left:332.40px;width:55.40px"><span class="tx g">初级认证</span></div><div class="td" style="left:387.80px;width:55.40px"></div><div class="td" style="left:443.20px;width:55.40px"><div class="fail"><span>加载失败</span></div></div><div class="td" style="left:498.60px;width:55.40px"><div class="fail"><span>加载失败</span></div></div><div class="td" style="left:554.00px;width:55.40px"><div class="fail"><span>加载失败</span></div></div><div class="td" style="left:609.40px;width:55.40px"></div><div class="td" style="left:664.80px;width:55.40px"><span class="tx la">admin</span></div><div class="td" style="left:720.20px;width:55.40px"><span class="tx g lk">通过</span></div><div class="td" style="left:775.60px;width:55.40px"></div></div>
<div id="sb"><div id="sbu"></div><div id="sbt"></div><div id="sbd"></div></div>
</div>
</div>
<span class="ptx" style="left:341px">共 286 条</span><div class="psel" style="left:390px;width:68.500px"><span>10条/页</span><svg class="chev" viewBox="0 0 12 8" width="8" height="5"><path d="M1 1.500l5 5 5-5" fill="none" stroke="#c0c4cc" stroke-width="1.300"/></svg></div><div class="pb dis" style="left:473.00px"><svg viewBox="0 0 10 11" width="7" height="7.700"><path d="M6.500 1.500 2.500 5.500l4 4" fill="none" stroke="#c0c4cc" stroke-width="1.300"/></svg></div><div class="pb on" style="left:500.75px">1</div><div class="pb" style="left:528.50px">2</div><div class="pb" style="left:556.25px">3</div><div class="pb" style="left:584.00px">4</div><div class="pb" style="left:611.75px">5</div><div class="pb" style="left:639.50px">6</div><div class="pb" style="left:667.25px"><svg viewBox="0 0 12 4" width="8.500" height="2.800"><circle cx="2" cy="2" r="1.200" fill="#303133"/><circle cx="6" cy="2" r="1.200" fill="#303133"/><circle cx="10" cy="2" r="1.200" fill="#303133"/></svg></div><div class="pb" style="left:695.00px">29</div><div class="pb" style="left:722.75px"><svg viewBox="0 0 10 11" width="7" height="7.700"><path d="M3.500 1.500l4 4-4 4" fill="none" stroke="#303133" stroke-width="1.300"/></svg></div><span class="ptx" style="left:762.500px">前往</span><div class="pin" style="left:784px;width:31.500px">1</div><span class="ptx" style="left:818.500px">页</span>
<div id="rstrip"></div><div id="bot"></div>
</body></html>
